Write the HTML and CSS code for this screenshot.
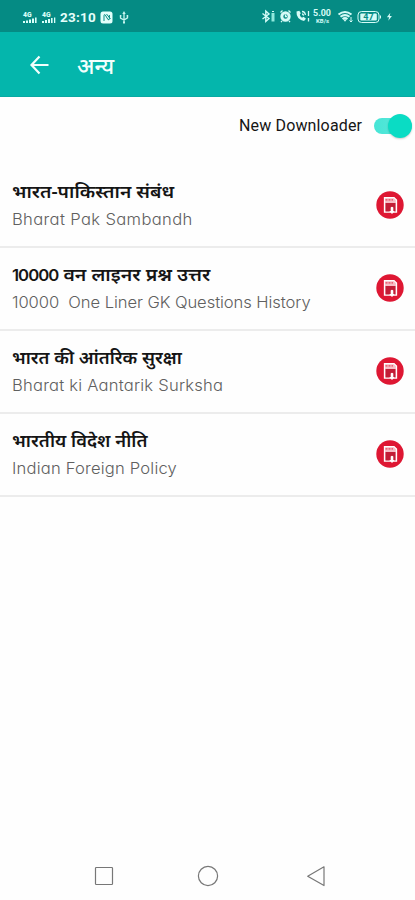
FILE: index.html
```html
<!DOCTYPE html>
<html lang="hi">
<head>
<meta charset="utf-8">
<meta name="viewport" content="width=device-width">
<title>अन्य</title>
<link rel="stylesheet" href="styles.css">
</head>
<body>
<svg width="0" height="0" class="defs">
  <symbol id="save" viewBox="0 0 28 28">
    <circle cx="14" cy="14" r="13.7" fill="#de1733"/>
    <path d="M8.500 6.600H18L20.500 9.100V21H8.500Z" fill="#f7bdc6" stroke="#fff" stroke-width="1.300"/>
    <path d="M9.500 8.800h2m1 0h2m1 0h1.500" stroke="#e6485d" stroke-width="1.300"/>
    <path d="M9.500 12h10v8.500h-10z" fill="#c21d36"/>
    <path d="M14.700 16.500q1.300-1.500 2.600 0v3.500h1.500l-2.800 3-2.800-3h1.500z" fill="#fff"/>
  </symbol>
</svg>
<header>
  <div class="status">
    <div class="left">
      <svg class="sig" width="34" height="14" viewBox="0 0 34 14">
        <g fill="#d9fffa"><path d="M1 11h2v2H1zM4 10.500h2V13H4zM7 9.500h2V13H7zM10 8.500h2V13h-2zM13 7.500h1.600V13H13zM20 11h2v2h-2zM23 10h2v3h-2zM26 9h2v4h-2zM29 8h1.600v5H29zM32 7.500h1.300V13H32z"/></g>
        <text x="1" y="7.300">4G</text><text x="20" y="7.300">4G</text>
      </svg>
      <span class="clock">23:10</span>
      <svg class="nfc" width="13" height="13" viewBox="0 0 13 13"><rect x=".5" y=".5" width="12" height="12" rx="2.500" fill="#e2fffb"/><path d="M4 10V4.500Q4 3 5.300 4L8 8.600Q9.400 9.500 9.400 7.500V4M6.500 3l4 5" fill="none" stroke="#078d85" stroke-width="1"/></svg>
      <svg class="usb" width="10" height="13" viewBox="0 0 10 13" fill="none" stroke="#c6f5ef" stroke-width="1.300"><path d="M5 2v9M1.500 5v2.200L5 9l3.500-2.200V5"/><path d="M5 0L3.300 3h3.400zM4 10.500h2v2H4zM.8 4h1.600v1.600H.8zM7.600 4h1.600v1.600H7.600z" fill="#c6f5ef" stroke="none"/></svg>
    </div>
    <svg class="right" width="134" height="18" viewBox="0 0 134 18" fill="none" stroke="#d5fbf7">
      <path d="M1.500 6.500l6.500 5-3.200 3v-10.500L8 7l-6.500 5" stroke-width="1.400"/>
      <path d="M10.500 6h3v8.500h-3z" fill="#8fe9dd" stroke="none"/><path d="M11 4.500h2"/>
      <circle cx="24.500" cy="9.500" r="3.700" stroke-width="3"/><path d="M19.500 5.500l2-2M27.500 3.500l2 2M21 14l-1 1.200M28 14l1 1.200M24.500 7.500v2h1.500" stroke-width="1.300"/>
      <path d="M35.500 4.500q-.5 7.500 7.500 9.500l2-2.300-2.500-2-1.500 1q-2.300-1.200-2.200-3.200l1-1.200-1.500-2.500z" fill="#d5fbf7" stroke="none"/>
      <path d="M41 4.500q3 0 3.400 3.500M41 7q1.300 0 1.600 1.700M47.500 4v5M47.500 11v3.500" stroke-width="1.300"/>
      <text x="52" y="9" class="speed" textLength="18" lengthAdjust="spacingAndGlyphs">5.00</text><text x="55" y="15.800" class="unit" textLength="13" lengthAdjust="spacingAndGlyphs">KB/s</text>
      <path d="M77.500 7.500q6.500-5 13 0M79.500 9.800q4.500-3.400 9 0M81.500 12q2.500-2 5 0" stroke-width="2"/><path d="M82 12.300h4l-2 2.500z" fill="#d5fbf7" stroke="none"/><path d="M90 10v5M88.500 13.500L90 15l1.500-1.500"/>
      <rect x="97" y="4.500" width="21" height="11" rx="3.500"/><rect x="99.300" y="6.500" width="16.500" height="7" rx="1" fill="#d5fbf7" stroke="none"/><path d="M119.500 8.500v3"/>
      <text x="102.300" y="13.100" class="batt">47</text>
      <path d="M129.300 5.800l-3.400 4.500h2.200l-.8 3.500 3.600-4.700h-2.200z" fill="#d5fbf7" stroke="none"/>
    </svg>
  </div>
  <div class="bar">
    <svg width="20" height="20" viewBox="0 0 20 20" fill="none" stroke="#f2fffd" stroke-width="2.200"><path d="M19.500 10H3M10.500 1.500L2.500 10l8 8.500"/></svg>
    <h1>अन्य</h1>
  </div>
</header>
<main>
  <div class="option"><span class="opt-label">New Downloader</span><span class="switch"><i></i></span></div>
  <ul>
    <li><div><h2 class="t1">भारत-पाकिस्तान संबंध</h2><p class="s1">Bharat Pak Sambandh</p></div><svg class="save"><use href="#save"/></svg></li>
    <li><div><h2 class="t2"><span class="num">10000</span> वन लाइनर प्रश्न उत्तर</h2><p class="s2">10000&nbsp; One Liner GK Questions History</p></div><svg class="save"><use href="#save"/></svg></li>
    <li><div><h2 class="t3">भारत की आंतरिक सुरक्षा</h2><p class="s3">Bharat ki Aantarik Surksha</p></div><svg class="save"><use href="#save"/></svg></li>
    <li><div><h2 class="t4">भारतीय विदेश नीति</h2><p class="s4">Indian Foreign Policy</p></div><svg class="save"><use href="#save"/></svg></li>
  </ul>
</main>
<nav>
  <svg width="22" height="24" viewBox="0 0 22 24"><rect x="2.500" y="3.500" width="17" height="17" rx=".8"/></svg>
  <svg width="22" height="24" viewBox="0 0 22 24"><circle cx="9" cy="12" r="9.600"/></svg>
  <svg width="22" height="24" viewBox="0 0 22 24"><path d="M19 2.800v18.800L2.700 12.200z" stroke-linejoin="round"/></svg>
</nav>
</body>
</html>
```
FILE: styles.css
```css
* { box-sizing: border-box; }
body { margin: 0; height: 900px; display: flex; flex-direction: column; background: #fefefe; color: #151515; font-family: "Noto Sans", "Liberation Sans", sans-serif; overflow: hidden; }
.defs { display: block; height: 0; flex: none; }
h1, h2, p, ul { margin: 0; padding: 0; }
svg { flex: none; }
.status { height: 32px; background: #058b84; display: flex; justify-content: space-between; padding: 0 20px 0 22px; }
.left { display: flex; align-items: center; }
.sig text { font: 900 6.8px Roboto, sans-serif; fill: #d9fffa; }
.sig { margin-top: 1px; }
.clock { font: 700 13.5px Roboto, sans-serif; color: #e5fffb; margin-left: 4px; width: 37px; letter-spacing: .25px; padding-top: 2px; }
.nfc { margin: 2px 0 0 3px; }
.usb { margin: 2px 0 0 6px; }
.right { margin-top: 7px; }
.right text { fill: #d5fbf7; stroke: none; font-family: Roboto, sans-serif; font-weight: 700; }
.right .speed { font-size: 8.5px; }
.right .unit { font-size: 6px; }
.right .batt { font-size: 9px; fill: #078d85; }
.bar { height: 65px; background: #04b6ac; display: flex; align-items: center; padding: 2px 0 0 29px; border-bottom: 1px solid #08aaa3; }
h1 { margin-left: 28px; font-size: 22px; line-height: 30px; font-weight: 500; color: #f2fffd; }
.option { height: 68px; display: flex; align-items: flex-start; justify-content: flex-end; padding: 14px 3px 0 0; }
.opt-label { font: 400 16px/30px Roboto, sans-serif; width: 123px; white-space: nowrap; letter-spacing: .15px; }
.switch { margin: 7px 0 0 12px; width: 38px; height: 16px; border-radius: 8px; background: linear-gradient(90deg, #46e5d6, #63e8dc); display: flex; justify-content: flex-end; align-items: center; }
.switch i { width: 24px; height: 24px; border-radius: 50%; background: #0adcc4; box-shadow: 0 1px 2px #0003; }
ul { list-style: none; }
li { height: 83px; padding: 12px 11px 0 12px; border-bottom: 2px solid #ececec; display: flex; justify-content: space-between; align-items: flex-start; }
li > div { display: flex; flex-direction: column; align-items: flex-start; }
h2 { height: 30px; font-size: 18px; line-height: 29px; font-weight: 600; white-space: nowrap; transform-origin: left; }
.num { font: 600 15.5px Inter, sans-serif; letter-spacing: -.9px; }
.t1 { transform: scaleX(1.063); }
.t2 { transform: scaleX(1.08); }
.t3 { transform: scaleX(1.01); }
.t4 { transform: scaleX(1.02); }
p { font: 300 15.5px/25px Inter, "Noto Sans", sans-serif; font-feature-settings: "cv11"; color: #606060; white-space: nowrap; transform: scaleX(1.07); transform-origin: left; }
.s1 { letter-spacing: .33px; }
.s2 { letter-spacing: -.07px; }
.s3 { letter-spacing: .2px; }
.s4 { letter-spacing: .18px; }
.save { width: 28px; height: 28px; margin-top: 14px; }
nav { margin-top: auto; height: 48px; display: flex; justify-content: space-between; align-items: center; padding: 0 88px 0 93px; }
nav svg { fill: none; stroke: #777; stroke-width: 1.2; overflow: visible; }
```
